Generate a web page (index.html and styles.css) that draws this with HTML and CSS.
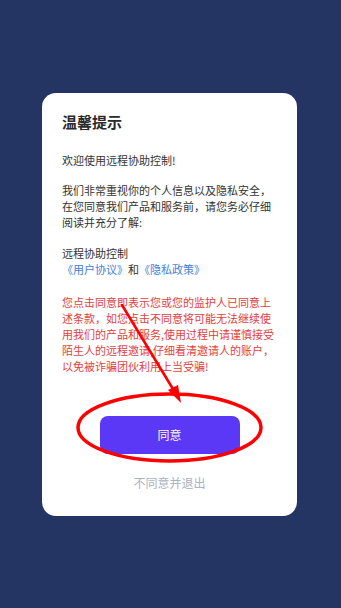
FILE: index.html
```html
<!DOCTYPE html>
<html lang="zh-CN">
<head>
<meta charset="utf-8">
<title>温馨提示</title>
<link rel="stylesheet" href="styles.css">
</head>
<body>
<div class="screen">
  <div class="dialog">
    <h1 class="title">温馨提示</h1>
    <p class="welcome">欢迎使用远程协助控制!</p>
    <p class="para">我们非常重视你的个人信息以及隐私安全，在您同意我们产品和服务前，请您务必仔细阅读并充分了解:</p>
    <div class="links">
      <p class="app">远程协助控制</p>
      <p class="agree-links"><span class="link">《用户协议》</span>和<span class="link">《隐私政策》</span></p>
    </div>
    <p class="warning">您点击同意即表示您或您的监护人已同意上述条款，如您点击不同意将可能无法继续使用我们的产品和服务,使用过程中请谨慎接受陌生人的远程邀请,仔细看清邀请人的账户，以免被诈骗团伙利用上当受骗!</p>
    <button class="btn-agree">同意</button>
    <div class="btn-exit">不同意并退出</div>
  </div>
  <svg class="annotation" width="341" height="608" viewBox="0 0 341 608">
    <ellipse cx="169.5" cy="427.5" rx="91.5" ry="33.5" fill="none" stroke="#ff0000" stroke-width="3.5"/>
    <line x1="122" y1="305" x2="176" y2="394" stroke="#ff0000" stroke-width="2.6" stroke-linecap="round"/>
    <polygon points="181,403 168,390 178,385" fill="#ff0000"/>
  </svg>
</div>
</body>
</html>
```
FILE: styles.css
```css
* { box-sizing: border-box; }
html, body {
  margin: 0;
  padding: 0;
  background: #243563;
}
body {
  font-family: "Noto Sans CJK SC", "Noto Sans", sans-serif;
}
.screen {
  position: relative;
  width: 341px;
  height: 608px;
  display: flex;
  align-items: center;
  justify-content: center;
  padding-right: 2px;
}
.dialog {
  width: 255px;
  background: #ffffff;
  border-radius: 14px;
  padding: 18px 20px 25px 20px;
  display: flex;
  flex-direction: column;
}
.title {
  margin: 0;
  font-size: 15px;
  line-height: 22px;
  font-weight: 600;
  color: #2b2b2b;
}
.welcome, .para, .app, .agree-links, .warning {
  margin: 0;
  font-size: 11px;
  line-height: 16px;
  color: #333333;
}
.welcome { margin-top: 19px; }
.para { margin-top: 14px; }
.links { margin-top: 15px; }
.link { color: #3f7fe0; }
.warning {
  margin-top: 17px;
  color: #e2403e;
}
.btn-agree {
  align-self: center;
  margin-top: 42px;
  width: 140px;
  height: 38px;
  border: none;
  border-radius: 8px;
  background: #5b37f6;
  color: #ffffff;
  font-family: inherit;
  font-size: 12px;
}
.btn-exit {
  margin-top: 21px;
  text-align: center;
  font-size: 12px;
  line-height: 16px;
  color: #a9b1c2;
}
.annotation {
  position: absolute;
  left: 0;
  top: 0;
  pointer-events: none;
}
```
